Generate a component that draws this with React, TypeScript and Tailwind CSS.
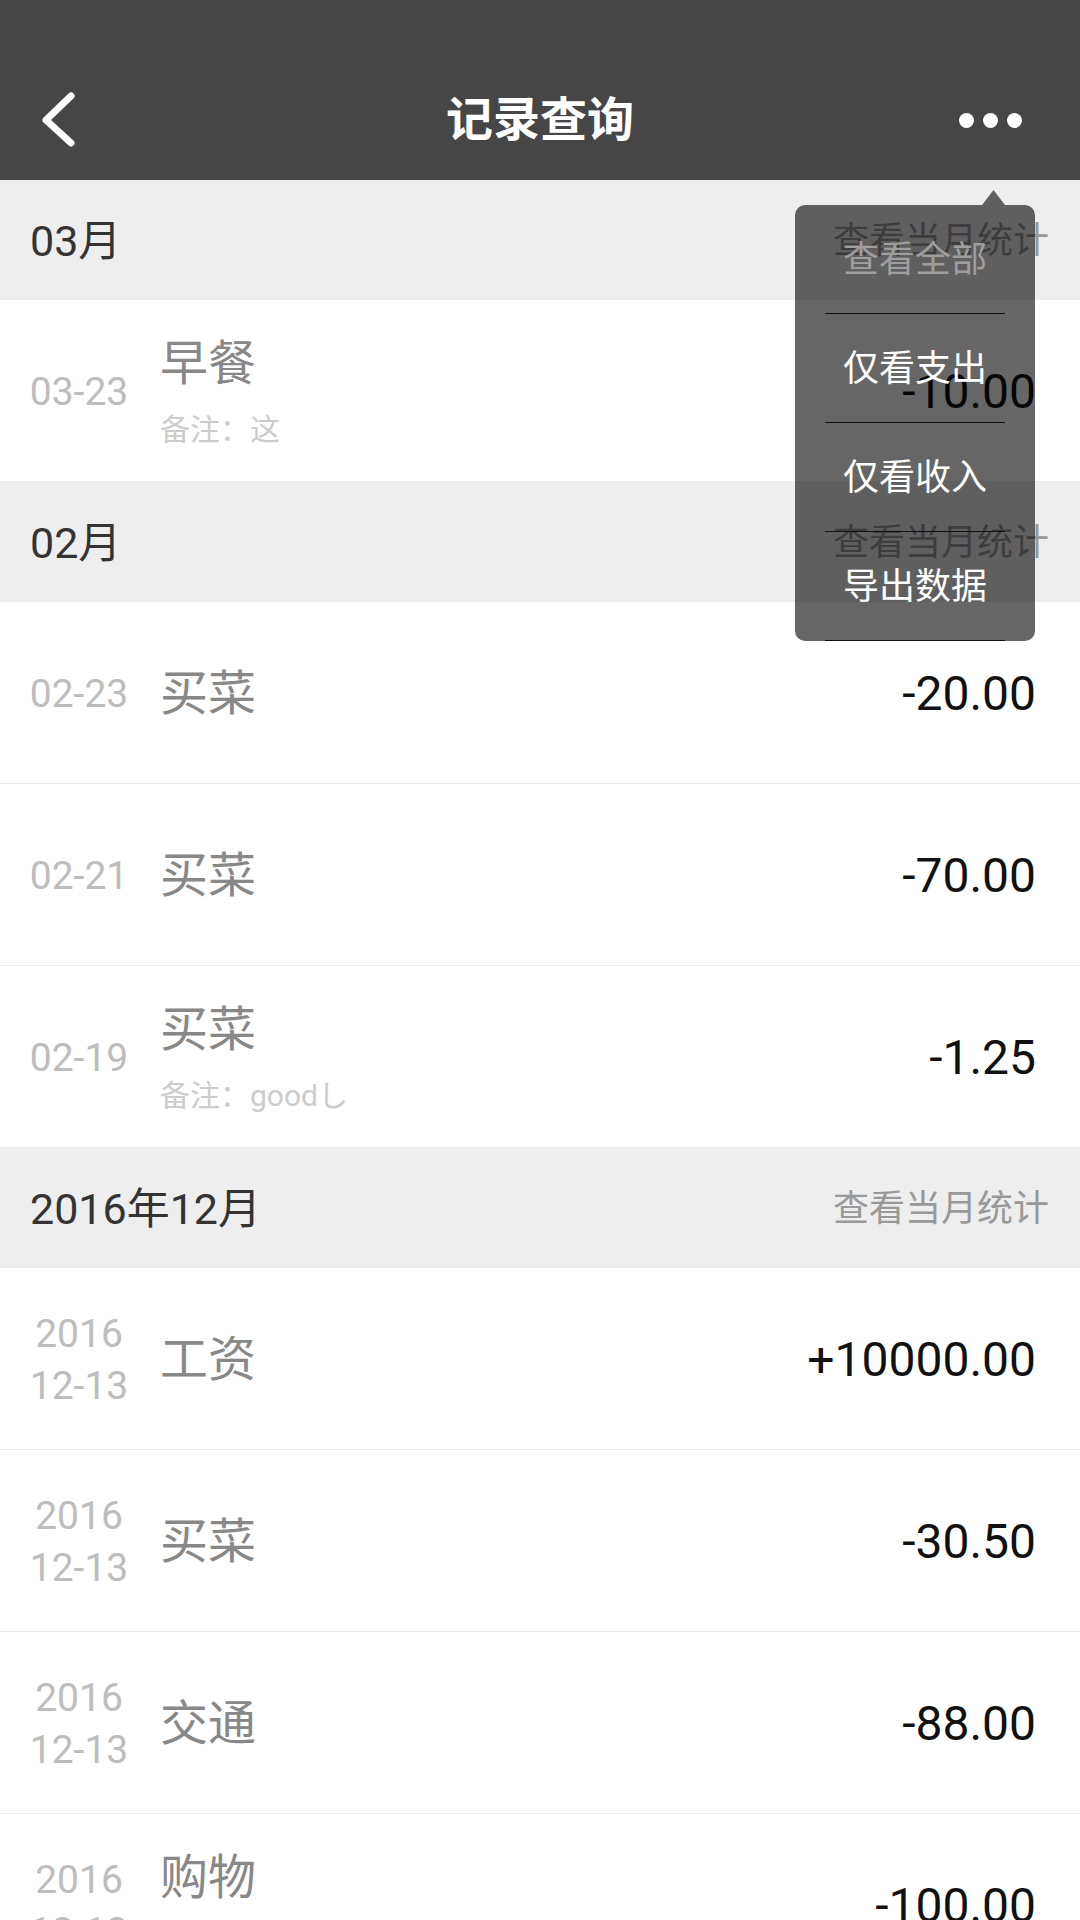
import React from 'react';

type Record = {
  date: string[];
  title: string;
  note?: string;
  amount: string;
};

type Month = {
  label: string;
  records: Record[];
};

const months: Month[] = [
  {
    label: '03月',
    records: [{ date: ['03-23'], title: '早餐', note: '备注：这', amount: '-10.00' }],
  },
  {
    label: '02月',
    records: [
      { date: ['02-23'], title: '买菜', amount: '-20.00' },
      { date: ['02-21'], title: '买菜', amount: '-70.00' },
      { date: ['02-19'], title: '买菜', note: '备注：goodし', amount: '-1.25' },
    ],
  },
  {
    label: '2016年12月',
    records: [
      { date: ['2016', '12-13'], title: '工资', amount: '+10000.00' },
      { date: ['2016', '12-13'], title: '买菜', amount: '-30.50' },
      { date: ['2016', '12-13'], title: '交通', amount: '-88.00' },
      { date: ['2016', '12-13'], title: '购物', note: '备注：', amount: '-100.00' },
    ],
  },
];

const menuItems = ['查看全部', '仅看支出', '仅看收入', '导出数据'];

const RecordRow = ({ record }: { record: Record }) => (
  <div className="flex h-[182px] items-center border-b border-[#ebebeb] bg-white pl-[29px] pr-[44px] pt-[3px]">
    {/* Date */}
    <div className="w-[100px] shrink-0 whitespace-nowrap text-center text-[39px] leading-[52px] text-[#bdbdbd]">
      {record.date.map((line) => (
        <div key={line}>{line}</div>
      ))}
    </div>

    {/* Title + note */}
    <div className="ml-[31px] flex flex-1 flex-col">
      <div className="text-[48px] leading-[56px] text-[#888888]">{record.title}</div>
      {record.note && (
        <div className="mt-[20px] whitespace-nowrap text-[30px] leading-[36px] text-[#cccccc]">{record.note}</div>
      )}
    </div>

    {/* Amount */}
    <div className="whitespace-nowrap text-[48px] leading-[56px] text-[#111111]">{record.amount}</div>
  </div>
);

const MonthSection = ({ month }: { month: Month }) => (
  <div>
    <div className="flex h-[120px] items-center justify-between bg-[#eeeeee] pl-[30px] pr-[31px] pt-[2px]">
      <span className="text-[43px] text-[#333333]">{month.label}</span>
      <span className="text-[36px] text-[#999999]">查看当月统计</span>
    </div>
    {month.records.map((r, i) => (
      <RecordRow key={i} record={r} />
    ))}
  </div>
);

export default function App() {
  return (
    <div className="relative h-[1920px] w-[1080px] overflow-hidden bg-white font-['Roboto','Noto_Sans_CJK_SC',sans-serif]">
      {/* Header */}
      <div className="bg-[#464646]">
        <div className="h-[60px]" />
        <div className="flex h-[120px] items-center">
          <div className="w-[200px] pl-[38px]">
            <svg width="40" height="60" viewBox="0 0 40 60" className="block">
              <polyline
                points="33,6 8,30 33,53"
                fill="none"
                stroke="#ffffff"
                strokeWidth="7"
                strokeLinecap="round"
                strokeLinejoin="round"
              />
            </svg>
          </div>
          <div className="flex-1 text-center text-[47px] font-bold text-white">记录查询</div>
          <div className="flex w-[200px] justify-end gap-[9px] pr-[58px]">
            <span className="h-[15px] w-[15px] rounded-full bg-white" />
            <span className="h-[15px] w-[15px] rounded-full bg-white" />
            <span className="h-[15px] w-[15px] rounded-full bg-white" />
          </div>
        </div>
      </div>

      {/* List */}
      {months.map((m) => (
        <MonthSection key={m.label} month={m} />
      ))}

      {/* Popup menu */}
      <div className="absolute left-[795px] top-[205px] w-[240px] rounded-[10px] bg-black/60">
        <svg
          width="23"
          height="15"
          viewBox="0 0 23 15"
          className="absolute -top-[15px] left-[187px] block"
        >
          <polygon points="11.5,0 23,15 0,15" fill="rgba(0,0,0,0.6)" />
        </svg>
        {menuItems.map((item, i) => (
          <div
            key={item}
            className={`mx-[30px] flex h-[109px] items-center justify-center border-b border-[#111111] pt-[2px] text-[36px] ${
              i === 0 ? 'text-[#9e9e9e]' : 'text-white'
            }`}
          >
            {item}
          </div>
        ))}
      </div>
    </div>
  );
}
